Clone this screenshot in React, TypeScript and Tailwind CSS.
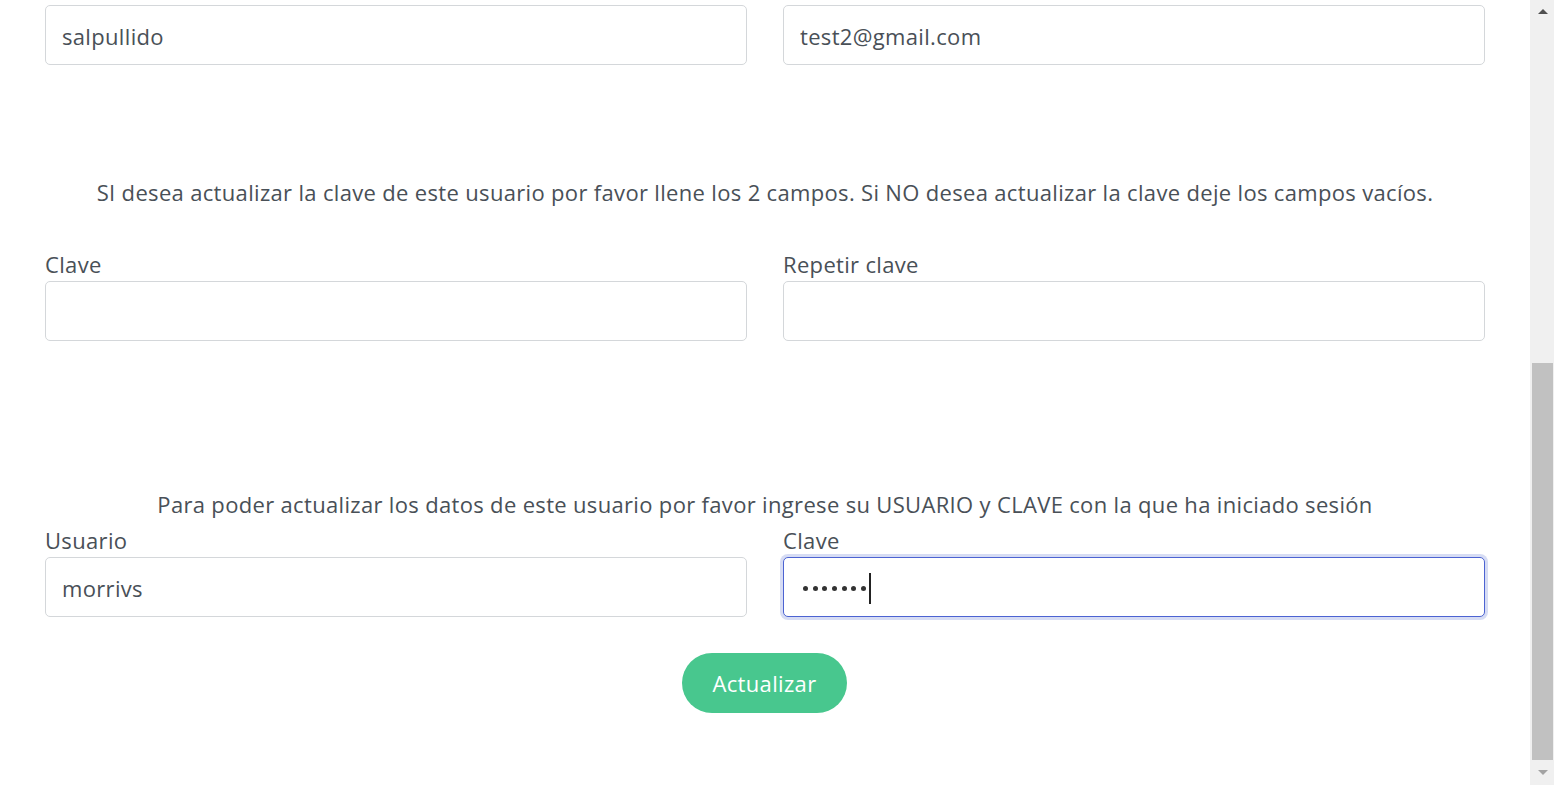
import React from "react";

const font = "font-['Open_Sans',sans-serif]";
const txt = "text-[22px] tracking-[0.33px] text-[#495057]";

function Field({ value, label }: { value?: string; label?: string }) {
  return (
    <div className="flex flex-col">
      {label && <label className={`${txt} leading-[30px] pb-[2px]`}>{label}</label>}
      <input
        readOnly
        value={value ?? ""}
        className={`h-[60px] w-full rounded-[5px] border border-[#d4d7da] bg-white px-4 pt-[1px] ${txt} outline-none`}
      />
    </div>
  );
}

function Scrollbar() {
  return (
    <div className="flex w-[24px] shrink-0 flex-col items-center bg-[#f0f0f0] pl-[1px]">
      <div className="flex h-[22px] items-center justify-center">
        <div className="h-0 w-0 border-x-[5px] border-b-[5px] border-x-transparent border-b-[#505050]" />
      </div>
      <div className="h-[341px]" />
      <div className="h-[397px] w-[21px] bg-[#c1c1c1]" />
      <div className="flex flex-1 items-center justify-center">
        <div className="h-0 w-0 border-x-[5px] border-t-[5px] border-x-transparent border-t-[#a3a3a3]" />
      </div>
    </div>
  );
}

export default function App() {
  return (
    <div className={`flex h-[785px] w-full overflow-hidden bg-white ${font}`}>
      <div className="flex-1">
        <div className="mx-auto w-[1440px] pt-[5px]">
          <div className="grid grid-cols-2 gap-x-[36px]">
            <Field value="salpullido" />
            <Field value="test2@gmail.com" />
          </div>

          <p className={`mt-[111px] text-center leading-[32px] ${txt}`}>
            SI desea actualizar la clave de este usuario por favor llene los 2 campos. Si NO desea actualizar la clave deje los campos vacíos.
          </p>

          <div className="mt-[41px] grid grid-cols-2 gap-x-[36px]">
            <Field label="Clave" />
            <Field label="Repetir clave" />
          </div>

          <p className={`mt-[147px] text-center leading-[32px] ${txt}`}>
            Para poder actualizar los datos de este usuario por favor ingrese su USUARIO y CLAVE con la que ha iniciado sesión
          </p>

          <div className="mt-[5px] grid grid-cols-2 gap-x-[36px]">
            <Field label="Usuario" value="morrivs" />
            <div className="flex flex-col">
              <label className={`${txt} leading-[30px] pb-[2px]`}>Clave</label>
              <div className="flex h-[60px] items-center rounded-[5px] border border-[#4c63d2] bg-white pl-[19px] pt-[3px] shadow-[0_0_0_3px_rgba(120,140,220,0.3)]">
                {[0, 1, 2, 3, 4, 5, 6].map((i) => (
                  <span key={i} className="mr-[4.7px] h-[5px] w-[5px] rounded-full bg-[#333]" />
                ))}
                <span className="-ml-[2px] h-[31px] w-[2px] bg-[#222]" />
              </div>
            </div>
          </div>

          <div className="mt-[36px] flex justify-center">
            <button className="-ml-[1px] h-[60px] w-[165px] rounded-full bg-[#48c78e] text-[22px] tracking-[0.33px] text-white">
              Actualizar
            </button>
          </div>
        </div>
      </div>
      <Scrollbar />
    </div>
  );
}
